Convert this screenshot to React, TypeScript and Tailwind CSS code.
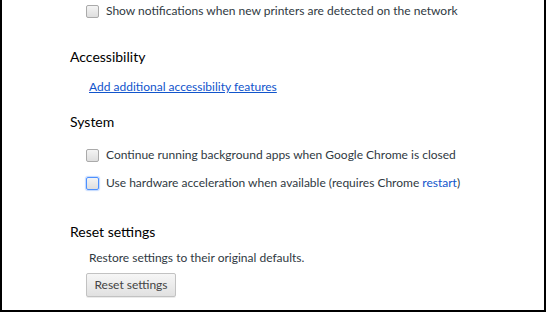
import React from 'react';

const font = { fontFamily: 'Lato, "Noto Sans", "Liberation Sans", sans-serif' };

const Checkbox: React.FC<{ focused?: boolean }> = ({ focused }) => (
    <span
        className={`inline-block w-[13px] h-[13px] rounded-[2px] border shrink-0 bg-gradient-to-b from-[#f4f4f4] to-[#dedede] ${
            focused ? 'border-[#4d90fe] shadow-[0_0_1px_1px_rgba(77,144,254,0.35)]' : 'border-[#aaaaaa]'
        }`}
    />
);

const CheckRow: React.FC<{ children: React.ReactNode; focused?: boolean; className?: string }> = ({ children, focused, className }) => (
    <div className={`flex items-center gap-[7px] pl-[18px] h-[22px] ${className ?? ''}`}>
        <Checkbox focused={focused} />
        <span className="text-[12px] text-[#303942]">{children}</span>
    </div>
);

const Heading: React.FC<{ children: React.ReactNode; className?: string }> = ({ children, className }) => (
    <h3 className={`text-[14px] text-black leading-[20px] font-normal pl-[2px] ${className ?? ''}`}>{children}</h3>
);

export default function App() {
    return (
        <div className="w-[546px] h-[312px] bg-white overflow-hidden border-2 border-t-0 border-black" style={font}>
            <div className="pl-[66px] flex flex-col">
                {/* printers option, top cut off */}
                <CheckRow>Show notifications when new printers are detected on the network</CheckRow>

                <Heading className="mt-[25px]">Accessibility</Heading>
                <div className="mt-[6px] h-[18px] pl-[21px]">
                    <a href="#" className="text-[12px] text-[#1155cc] underline leading-[18px]">
                        Add additional accessibility features
                    </a>
                </div>

                <Heading className="mt-[21px]">System</Heading>
                <CheckRow className="mt-[12px]">Continue running background apps when Google Chrome is closed</CheckRow>
                <CheckRow className="mt-[6px]" focused>
                    Use hardware acceleration when available (requires Chrome{' '}
                    <span className="text-[#1155cc]">restart</span>)
                </CheckRow>

                <Heading className="mt-[28px]">Reset settings</Heading>
                <div className="mt-[7px] h-[18px] leading-[18px] pl-[21px] text-[12px] text-[#303942]">
                    Restore settings to their original defaults.
                </div>
                <div className="mt-[6px] pl-[18px] flex">
                    <button className="h-[24px] w-[90px] text-[12px] text-[#444] rounded-[2px] border border-[#c2c2c2] bg-gradient-to-b from-[#f6f6f6] to-[#e1e1e1] shadow-[0_1px_0_rgba(0,0,0,0.08)]">
                        Reset settings
                    </button>
                </div>
            </div>
        </div>
    );
}
